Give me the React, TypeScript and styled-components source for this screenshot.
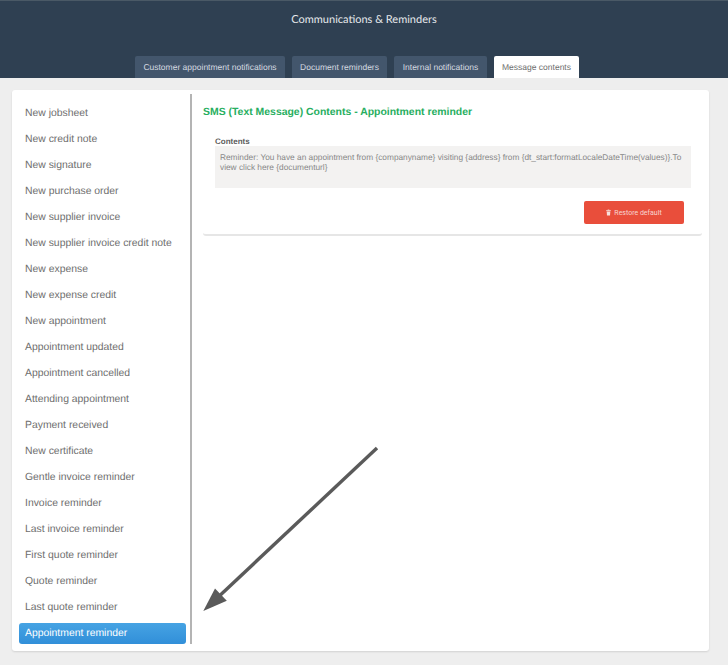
import React from "react";
import styled, { createGlobalStyle } from "styled-components";

const Global = createGlobalStyle`
  html, body { margin: 0; padding: 0; background: #eeeeee; }
  body { font-family: "Liberation Sans", Arial, sans-serif; text-rendering: geometricPrecision; }
  #root { width: 728px; height: 665px; overflow: hidden; }
`;

const Page = styled.div`
  position: relative;
  width: 728px;
  height: 665px;
  background: #eeeeee;
`;

const Header = styled.header`
  height: 78px;
  box-sizing: border-box;
  background: #2f4052;
  border-top: 1px solid #4a5966;
  display: flex;
  flex-direction: column;
  align-items: center;
`;

const Title = styled.h1`
  margin: 12px 0 0;
  height: 14px;
  font-family: Lato, "Liberation Sans", sans-serif;
  font-size: 11px;
  line-height: 14px;
  font-weight: 400;
  color: #e6e9ec;
`;

const Tabs = styled.nav`
  margin-top: 29px;
  display: flex;
  gap: 7px;
  padding-left: 135px;
  align-self: stretch;
`;

const Tab = styled.div<{ $width: number; $active?: boolean }>`
  width: ${(p) => p.$width}px;
  height: 22px;
  display: flex;
  align-items: center;
  justify-content: center;
  border-radius: 2px 2px 0 0;
  font-size: 8.5px;
  background: ${(p) => (p.$active ? "#ffffff" : "#43566c")};
  color: ${(p) => (p.$active ? "#6e6e6e" : "#d5dae0")};
`;

const Main = styled.main`
  padding: 12px 19px 14px 12px;
`;

const Card = styled.section`
  height: 561px;
  box-sizing: border-box;
  background: #ffffff;
  border-radius: 3px;
  box-shadow: 0 1px 2px rgba(0, 0, 0, 0.12);
  display: flex;
  padding: 4px 7px 7px;
`;

const Sidebar = styled.aside`
  width: 173px;
  flex: none;
  box-sizing: border-box;
  border-right: 2px solid #b4b4b4;
  padding: 9px 4px 0 0;
  display: flex;
  flex-direction: column;
  gap: 5px;
`;

const Item = styled.div<{ $active?: boolean }>`
  height: 21px;
  flex: none;
  box-sizing: border-box;
  padding-left: 6px;
  font-size: 10.4px;
  line-height: 21px;
  border-radius: 3px;
  color: ${(p) => (p.$active ? "#ffffff" : "#6e6e6e")};
  background: ${(p) =>
    p.$active ? "linear-gradient(#46a3e3, #318fd9)" : "transparent"};
`;

const Content = styled.div`
  flex: 1;
  padding: 12px 0 0 11px;
`;

const Heading = styled.h2`
  margin: 0;
  font-size: 10.45px;
  line-height: 13px;
  font-weight: 700;
  color: #27ae60;
`;

const Section = styled.div`
  margin-top: 18px;
  height: 99px;
  box-sizing: border-box;
  border-bottom: 2px solid #e6e6e6;
  border-radius: 0 0 3px 3px;
  padding: 0 11px 0 12px;
`;

const Label = styled.div`
  font-size: 8px;
  line-height: 9px;
  font-weight: 700;
  color: #5c5c5c;
`;

const Box = styled.div`
  height: 42px;
  box-sizing: border-box;
  padding: 6px 5px;
  background: #f3f2f1;
  font-size: 8.3px;
  line-height: 10px;
  color: #888888;
`;

const Actions = styled.div`
  margin-top: 13px;
  padding-right: 7px;
  display: flex;
  justify-content: flex-end;
`;

const RestoreButton = styled.button`
  width: 100px;
  height: 23px;
  border: 0;
  border-radius: 2px;
  background: #e94e3b;
  color: #f8d5d0;
  font-family: Roboto, "Liberation Sans", sans-serif;
  font-size: 7px;
  display: flex;
  align-items: center;
  justify-content: center;
  gap: 3px;
  padding: 0;
`;

const Arrow = styled.svg`
  position: absolute;
  left: 0;
  top: 0;
  pointer-events: none;
`;

const items = [
  "New jobsheet",
  "New credit note",
  "New signature",
  "New purchase order",
  "New supplier invoice",
  "New supplier invoice credit note",
  "New expense",
  "New expense credit",
  "New appointment",
  "Appointment updated",
  "Appointment cancelled",
  "Attending appointment",
  "Payment received",
  "New certificate",
  "Gentle invoice reminder",
  "Invoice reminder",
  "Last invoice reminder",
  "First quote reminder",
  "Quote reminder",
  "Last quote reminder",
  "Appointment reminder",
];

const smsBody =
  "Reminder: You have an appointment from {companyname} visiting {address} from {dt_start:formatLocaleDateTime(values)}.To view click here {documenturl}";

export default function App() {
  return (
    <Page>
      <Global />
      <Header>
        <Title>Communications &amp; Reminders</Title>
        <Tabs>
          <Tab $width={150}>Customer appointment notifications</Tab>
          <Tab $width={95}>Document reminders</Tab>
          <Tab $width={93}>Internal notifications</Tab>
          <Tab $width={85} $active>Message contents</Tab>
        </Tabs>
      </Header>
      <Main>
        <Card>
          <Sidebar>
            {items.map((t) => (
              <Item key={t} $active={t === "Appointment reminder"}>{t}</Item>
            ))}
          </Sidebar>
          <Content>
            <Heading>SMS (Text Message) Contents - Appointment reminder</Heading>
            <Section>
              <Label>Contents</Label>
              <Box>{smsBody}</Box>
              <Actions>
                <RestoreButton>
                  <svg width="5" height="7" viewBox="0 0 6 7" fill="#f8e0dc">
                    <rect x="0.2" y="0.8" width="5.6" height="1" />
                    <rect x="2" y="0" width="2" height="1" />
                    <path d="M0.8 2.2h4.4l-.4 4.8H1.2z" />
                  </svg>
                  Restore default
                </RestoreButton>
              </Actions>
            </Section>
          </Content>
        </Card>
      </Main>
      <Arrow width="728" height="665" viewBox="0 0 728 665">
        <line x1="377" y1="448" x2="214" y2="601" stroke="#5a5a5a" strokeWidth="3.4" />
        <polygon points="203.3,611 215,588.5 226.8,600.8" fill="#5a5a5a" />
      </Arrow>
    </Page>
  );
}
